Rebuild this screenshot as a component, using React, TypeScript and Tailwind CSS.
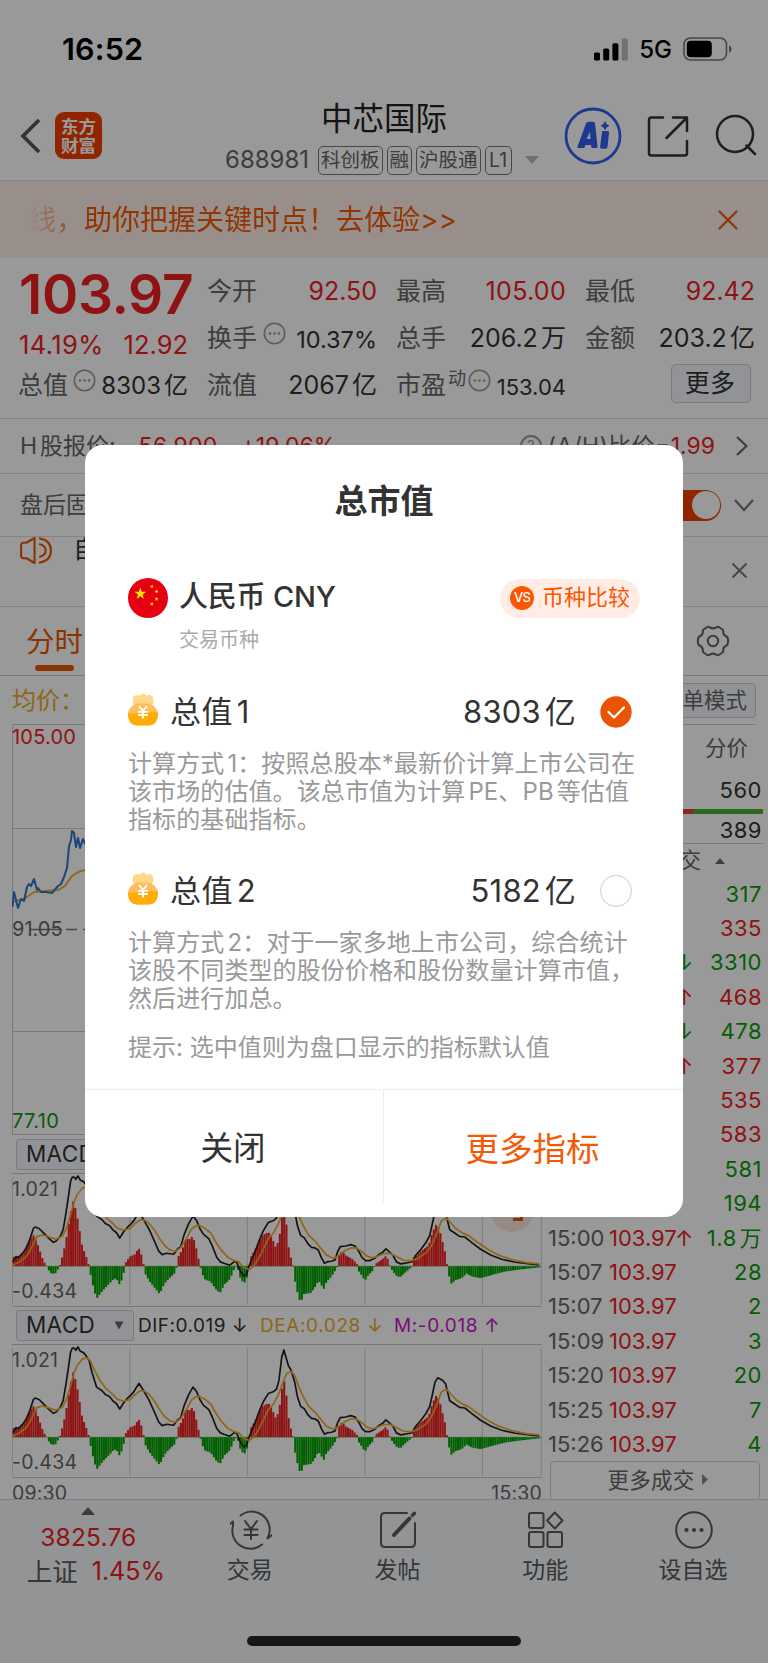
import type { ReactNode } from "react";

const FONT = "font-['Inter','Noto_Sans_CJK_SC',sans-serif] [text-autospace:normal]";

const UP = "text-[#f02020]";
const DOWN = "text-[#0a9b0a]";

// [time, price, arrow, volume, volume colour]
const TRADES: [string, string, string, string, "up" | "down"][] = [
  ["", "", "", "317", "down"],
  ["", "", "", "335", "up"],
  ["", "", "↓", "3310", "down"],
  ["", "", "↑", "468", "up"],
  ["", "", "↓", "478", "down"],
  ["", "", "↑", "377", "up"],
  ["", "", "", "535", "up"],
  ["", "", "", "583", "up"],
  ["", "", "", "581", "down"],
  ["", "", "", "194", "down"],
  ["15:00", "103.97", "↑", "1.8万", "down"],
  ["15:07", "103.97", "", "28", "down"],
  ["15:07", "103.97", "", "2", "down"],
  ["15:09", "103.97", "", "3", "down"],
  ["15:20", "103.97", "", "20", "down"],
  ["15:25", "103.97", "", "7", "down"],
  ["15:26", "103.97", "", "4", "down"],
];

// MACD series share one coordinate space, zero line at y=741
const ZERO = 741;
const DIF =
  "36,728 45,712 52,715 66,700 75,685 85,660 95,627 100,623 112,628 125,642 140,658 152,669 160,665 172,650 180,630 188,580 195,530 201,485 206,472 212,473 216,479 222,469 229,482 238,486 246,497 254,510 262,545 275,590 290,600 300,612 312,618 322,632 332,640 341,656 352,638 362,625 372,615 382,603 388,592 396,579 404,592 412,606 425,630 440,665 452,695 462,706 475,702 495,705 505,690 515,682 525,645 538,612 550,590 560,603 570,628 580,645 595,658 605,680 618,715 628,728 640,733 655,738 668,727 675,730 685,755 695,771 703,765 710,740 718,720 728,695 738,665 750,635 765,609 780,603 788,596 795,570 803,500 809,478 815,500 822,525 830,540 840,575 848,620 857,648 867,655 878,674 888,684 898,686 907,692 916,715 925,732 935,727 945,726 955,722 962,698 970,682 985,680 1000,676 1012,680 1022,695 1032,715 1042,724 1055,724 1068,717 1080,706 1090,700 1100,689 1110,698 1120,708 1130,728 1142,734 1155,732 1175,727 1185,708 1200,690 1215,668 1225,648 1233,610 1240,575 1248,562 1262,570 1270,580 1282,631 1295,640 1310,651 1325,653 1345,670 1370,690 1400,708 1430,720 1470,729 1510,734 1537,737";
const DEA =
  "36,738 55,728 75,712 90,685 105,652 120,647 138,652 160,660 178,650 190,625 200,590 210,550 220,524 235,505 248,502 258,512 270,540 285,570 300,592 318,609 335,627 350,632 370,628 385,612 400,601 412,602 425,612 440,632 455,658 470,680 485,692 500,696 515,685 530,660 545,630 558,619 568,618 580,624 600,640 615,668 630,692 650,715 665,723 680,728 695,745 710,751 722,742 735,722 750,690 765,658 780,640 795,610 808,570 818,548 830,543 840,555 852,590 865,620 880,648 900,668 915,688 930,707 945,715 955,716 970,705 985,693 1000,686 1015,686 1030,696 1045,710 1060,716 1075,712 1090,704 1110,702 1130,712 1150,723 1170,725 1190,718 1215,700 1230,680 1245,642 1258,605 1272,596 1285,610 1300,628 1320,642 1335,648 1360,668 1390,690 1420,707 1460,722 1500,730 1537,734";
const HIST =
  "36,715 45,712 55,712 62,705 75,686 85,660 98,645 103,662 112,690 120,715 130,738 135,741 138,752 148,765 158,762 165,750 170,741 172,730 180,705 190,650 200,585 208,545 216,570 224,615 234,680 245,710 254,741 258,765 268,815 276,838 285,825 295,812 315,790 325,778 332,780 341,797 350,775 356,741 358,730 370,712 385,705 395,685 405,712 410,741 412,760 425,785 440,805 455,825 468,795 480,780 500,760 504,741 508,712 520,690 530,658 540,660 550,650 560,690 566,720 571,741 575,762 585,782 600,787 615,810 627,822 640,795 652,785 662,765 670,741 678,750 686,780 696,793 706,770 710,741 714,715 725,695 735,675 745,650 765,638 775,655 785,682 795,665 803,600 809,565 816,610 822,680 830,720 836,741 840,780 850,830 857,852 866,825 885,822 895,810 908,785 915,795 922,812 930,790 945,772 958,750 962,741 964,712 975,695 985,708 1005,720 1018,735 1020,741 1022,755 1032,770 1040,785 1050,768 1062,755 1068,741 1072,732 1090,720 1102,708 1108,730 1112,741 1115,748 1128,768 1140,775 1155,760 1172,745 1176,741 1178,718 1195,700 1210,688 1222,678 1232,640 1245,612 1255,640 1262,670 1270,705 1275,741 1278,762 1286,794 1300,782 1315,778 1330,763 1345,772 1370,777 1400,768 1440,757 1490,750 1542,744";

const histPoints = HIST.split(" ").map((p) => p.split(",").map(Number));

function histAt(x: number) {
  const i = histPoints.findIndex((p) => p[0] >= x);
  if (i <= 0) return histPoints[0][1];
  const [x0, y0] = histPoints[i - 1];
  const [x1, y1] = histPoints[i];
  return y0 + ((y1 - y0) * (x - x0)) / (x1 - x0);
}

const BARS = Array.from({ length: 240 }, (_, i) => {
  const x = 36 + i * 6.27;
  return { x, y: histAt(x + 3) };
});

function MacdChart() {
  return (
    <div className="relative h-[134px] w-[530px] border-t border-b border-[#c3c6cd]">
      <svg className="block h-full w-full" viewBox="34 463 1511 398" preserveAspectRatio="none">
        {[35, 370, 705, 1040, 1375, 1543].map((x) => (
          <path key={x} d={`M${x} 472V857`} stroke="#d0d3dc" strokeWidth="3" />
        ))}
        {BARS.map((b) => (
          <rect
            key={b.x}
            x={b.x}
            width="5.9"
            y={Math.min(b.y, ZERO)}
            height={Math.abs(b.y - ZERO)}
            fill={b.y < ZERO ? "#f02020" : "#00a000"}
          />
        ))}
        <path d={`M36 ${ZERO}H1543`} stroke="#00a000" strokeWidth="1.5" opacity="0.6" />
        <polyline points={DIF} fill="none" stroke="#222" strokeWidth="1.7" strokeLinejoin="round" vectorEffect="non-scaling-stroke" />
        <polyline points={DEA} fill="none" stroke="#eeaa2c" strokeWidth="1.7" strokeLinejoin="round" vectorEffect="non-scaling-stroke" />
      </svg>
      <span className="absolute left-0 top-[3px] text-[19.5px] leading-6 tracking-[0.200px] text-[#666]">1.021</span>
      <span className="absolute left-0 bottom-[3px] text-[19.5px] leading-6 tracking-[0.300px] text-[#666]">-0.434</span>
    </div>
  );
}

function MacdButton() {
  return (
    <div className="flex h-[31px] w-[118px] items-center justify-between rounded-[3px] border border-[#c6cbd4] bg-[#f3f6fb] pl-[9px] pr-[9px] text-[22.500px] leading-none tracking-[0.300px] text-[#333]">
      MACD
      <svg width="10" height="9" viewBox="0 0 10 9" fill="#666">
        <path d="M0.5 0.5h9L5 8.500z" />
      </svg>
    </div>
  );
}

function Dots({ className }: { className: string }) {
  return (
    <svg className={className} width="23" height="23" viewBox="0 0 23 23" fill="none" stroke="#999" strokeWidth="1.6">
      <circle cx="11.500" cy="11.500" r="10.200" />
      <g fill="#999" stroke="none">
        <circle cx="7" cy="11.500" r="1.300" />
        <circle cx="11.500" cy="11.500" r="1.300" />
        <circle cx="16" cy="11.500" r="1.300" />
      </g>
    </svg>
  );
}

type QuoteProps = { label: string; value: string; className?: string; children?: ReactNode };

function Quote({ label, value, className = "text-[25px] text-[#333]", children }: QuoteProps) {
  return (
    <div className="flex h-[47px] items-center justify-between whitespace-nowrap">
      <span className="-ml-[1px] flex text-[25px] text-[#666]">
        {label}
        {children}
      </span>
      <span className={className}>{value}</span>
    </div>
  );
}

function Tag({ children }: { children: ReactNode }) {
  return <span className="whitespace-nowrap rounded-[5px] border border-[#777] px-[2px] text-[19.5px] leading-[27px]">{children}</span>;
}

function StatusBar() {
  return (
    <div className="flex h-[98px] items-center justify-between pl-[62px] pr-[36px] text-black">
      <span className="text-[30.500px] font-semibold leading-none tracking-[0.200px]">16:52</span>
      <div className="flex items-center">
        <svg width="34" height="23" viewBox="0 0 34 23">
          <rect x="0" y="14.500" width="6" height="8" rx="1.500" />
          <rect x="9.200" y="10.500" width="6" height="12" rx="1.500" />
          <rect x="18.400" y="5.300" width="6" height="17.200" rx="1.500" />
          <rect x="27.800" y="0.500" width="6" height="22" rx="1.500" fill="#bbb" />
        </svg>
        <span className="ml-[11px] mt-[2px] text-[24px] font-medium leading-none">5G</span>
        <svg className="ml-[11px]" width="49" height="24" viewBox="0 0 49 24">
          <rect x="1" y="1" width="42.500" height="22" rx="6.500" fill="none" stroke="#777" strokeWidth="1.600" />
          <rect x="3.800" y="3.800" width="25" height="16.400" rx="4" />
          <path d="M46 8.500c3.500 1 3.500 6 0 7z" fill="#777" />
        </svg>
      </div>
    </div>
  );
}

function Header() {
  return (
    <header className="flex h-[83px] items-start border-b border-[#d5d8de]">
      <svg className="ml-[20px] mt-[20px]" width="22" height="36" viewBox="0 0 22 36" fill="none" stroke="#555" strokeWidth="3.600">
        <path d="M19 2L3 18l16 16" />
      </svg>
      <div className="ml-[13px] mt-[14px] flex h-[47px] w-[47px] flex-col items-center justify-center rounded-[9px] bg-[#f03e00] text-[17.500px] font-bold leading-[19px] text-white">
        <span>东方</span>
        <span>财富</span>
      </div>
      <div className="ml-[123px] w-[313px] text-[#666]">
        <h1 className="pl-[96px] text-[31.500px] leading-[42px] text-[#222]">中芯国际</h1>
        <div className="mt-[5px] flex items-center gap-[4px]">
          <span className="mr-[3px] w-[86px] shrink-0 text-[24px] leading-[30px]">688981</span>
          <Tag>科创板</Tag>
          <Tag>融</Tag>
          <Tag>沪股通</Tag>
          <Tag>
            <span className="px-[1.500px]">L1</span>
          </Tag>
          <svg className="ml-[9px] shrink-0" width="14" height="8" viewBox="0 0 14 8" fill="#bbb">
            <path d="M0 0h14L7 8z" />
          </svg>
        </div>
      </div>
      <svg className="ml-[26px] mt-[9px]" width="58" height="58" viewBox="0 0 58 58">
        <circle cx="29" cy="29" r="27" fill="none" stroke="#3560f0" strokeWidth="2.800" />
        <path d="M13.500 39.500L22 16.500q.8-1.700 2.800-1.700h4q2 0 2.300 2l2.400 22.700q0 1.500-1.500 1.500h-4.500l-.5-3h-5.500l-1.200 3h-5.300q-2 0-1.500-1.500zM22.500 32h4l-.5-7z" fill="#3560f0" />
        <path d="M38.200 24h5.600q1.500 0 1.300 1.500L43.500 40q-.2 1.800-2 1.800h-4q-1.700 0-1.500-1.800z" fill="#3560f0" />
        <path d="M41 14q1 3.500 4.500 4.700Q42 20 41 23.200q-1-3.300-4.500-4.500Q40 17.500 41 14z" fill="#3560f0" />
      </svg>
      <svg className="ml-[25px] mt-[17px]" width="42" height="42" viewBox="0 0 42 42" fill="none" stroke="#333" strokeWidth="2.500" strokeLinecap="round" strokeLinejoin="round">
        <path d="M16 2.500H4.500q-2.500 0-2.500 2.500v33q0 2.500 2.500 2.500h33q2.500 0 2.500-2.500V26M26 2.500h14V16M40 2.500L19.500 23" />
      </svg>
      <svg className="ml-[25px] mt-[15px]" width="44" height="44" viewBox="0 0 44 44" fill="none" stroke="#333" strokeWidth="2.500" strokeLinecap="round">
        <circle cx="21" cy="21" r="18" />
        <path d="M32.500 32.500L41 41" />
      </svg>
    </header>
  );
}

function Banner() {
  return (
    <div className="flex h-[77px] items-center justify-between bg-[#ffeee6] pl-[28px] pr-[30px] text-[28px] text-[#f0590a]">
      <span className="[mask-image:linear-gradient(to_right,transparent,black_60px)]">线，助你把握关键时点！去体验&gt;&gt;</span>
      <svg width="20" height="20" viewBox="0 0 20 20" stroke="#f0590a" strokeWidth="2.200" strokeLinecap="round">
        <path d="M1.500 1.500l17 17M18.500 1.500l-17 17" />
      </svg>
    </div>
  );
}

function QuotePanel() {
  return (
    <section className="grid h-[161px] grid-cols-4 gap-x-[20px] border-b border-[#ddd] pl-[19px] pr-[13px] pt-[10px]">
      <div>
        <div className={`h-[52px] whitespace-nowrap text-[55px] font-semibold leading-[52px] tracking-[-0.300px] ${UP}`}>103.97</div>
        <div className={`flex h-[42px] items-center justify-between pt-[8px] text-[25.500px] leading-none ${UP}`}>
          <span className="tracking-[0.400px]">14.19%</span>
          <span>12.92</span>
        </div>
        <Quote label="总值" value="8303亿" className="pt-[1px] text-[24px] text-[#333]">
          <Dots className="ml-[5px] mt-[2px]" />
        </Quote>
      </div>
      <div>
        <Quote label="今开" value="92.50" className={`text-[25px] ${UP}`} />
        <Quote label="换手" value="10.37%" className="pt-[2px] text-[23.500px] text-[#333]">
          <Dots className="ml-[6px] mt-[2px]" />
        </Quote>
        <Quote label="流值" value="2067亿" />
      </div>
      <div>
        <Quote label="最高" value="105.00" className={`text-[25px] tracking-[0.300px] ${UP}`} />
        <Quote label="总手" value="206.2万" />
        <Quote label="市盈" value="153.04" className="mt-[4px] text-[22px] text-[#333]">
          <span className="-mt-[2px] ml-[2px] text-[18px]">动</span>
          <Dots className="ml-[2px] mt-[2px]" />
        </Quote>
      </div>
      <div>
        <Quote label="最低" value="92.42" className={`text-[25px] ${UP}`} />
        <Quote label="金额" value="203.2亿" />
        <div className="ml-auto mr-[4px] mt-[2px] flex h-[39px] w-[80px] items-center justify-center rounded-[5px] border border-[#c6cbd4] bg-[#f3f6fb] pr-[2px] text-[25px] tracking-[0.300px] text-[#333]">
          更多
        </div>
      </div>
    </section>
  );
}

function InfoRows() {
  return (
    <>
      <div className="flex h-[55px] items-center justify-between border-b border-[#ddd] pl-[20px] pr-[20px] text-[23px] text-[#666]">
        <span>
          H股报价:<span className={`ml-[23px] tracking-[0.300px] ${UP}`}>56.900</span>
          <span className={`ml-[23px] ${UP}`}>+19.06%</span>
        </span>
        <span className="flex items-center">
          <span className="mr-[6px] flex size-[22px] items-center justify-center rounded-full border-2 border-[#999] text-[15px] text-[#999]">?</span>
          <span className="tracking-[0.400px]">(A/H)比价=</span>
          <span className={UP}>1.99</span>
          <svg className="ml-[21px]" width="12" height="20" viewBox="0 0 12 20" fill="none" stroke="#666" strokeWidth="2.200">
            <path d="M1 1l9.500 9L1 19" />
          </svg>
        </span>
      </div>
      <div className="flex h-[63px] items-center border-b border-[#ddd] pl-[20px] pr-[14px] text-[23px] text-[#666]">
        盘后固定价格交易
        <div className="ml-auto flex h-[31px] w-[56px] items-center justify-end rounded-full bg-[#f03e00] p-[1.500px]">
          <div className="size-[28px] rounded-full bg-white" />
        </div>
        <svg className="ml-[13px]" width="20" height="13" viewBox="0 0 20 13" fill="none" stroke="#777" strokeWidth="2.200">
          <path d="M1 1l9 10 9-10" />
        </svg>
      </div>
      <div className="flex h-[70px] items-start overflow-hidden border-b border-[#ddd] pl-[19px] pr-[20px]">
        <svg width="34" height="27" viewBox="0 0 34 28" fill="none" stroke="#ea5504" strokeWidth="2.200" strokeLinejoin="round" strokeLinecap="round">
          <path d="M7 6L15.500 1v26L7 22H4q-2.500 0-2.500-3V9q0-3 2.500-3z" />
          <path d="M21 7.500q6 1.500 6 6.500t-6 6.500M21 1.500q11.500 2 11.500 12.500T21 26.500" />
        </svg>
        <span className="-mt-[6px] ml-[20px] text-[25px] leading-[36px] text-[#333]">自选</span>
        <svg className="ml-auto mt-[25px]" width="17" height="17" viewBox="0 0 17 17" stroke="#777" strokeWidth="2">
          <path d="M1.500 1.500l14 14M15.500 1.500l-14 14" />
        </svg>
      </div>
      <div className="flex h-[69px] items-center justify-between border-b border-[#ccc] pl-[26px] pr-[38px]">
        <div className="flex flex-col items-center text-[28.500px] text-[#ea5504]">
          <span className="mt-[8px] leading-[44px]">分时</span>
          <span className="mt-[1px] h-[6px] w-[39px] rounded-full bg-[#ea5504]" />
        </div>
        <svg width="34" height="32" viewBox="0 0 34 32" fill="none" stroke="#666" strokeWidth="2.100" strokeLinejoin="round">
          <circle cx="17" cy="16" r="5.200" />
          <path d="M10.500 2.500q1.500-1.500 3.500 0 3 1.800 6 0 2-1.500 3.500 0l3 2q.8.700.7 2.500.3 3.500 3 4.300 1.300.6 1.500 2 .8 2.700 0 5.400-.3 1.400-1.500 2-2.700.8-3 4.300.1 1.800-.7 2.500l-3 2q-1.500 1.500-3.500 0-3-1.800-6 0-2 1.500-3.500 0l-3-2q-.8-.7-.7-2.500-.3-3.500-3-4.300-1.200-.6-1.500-2-.8-2.700 0-5.400.2-1.400 1.500-2 2.700-.8 3-4.300-.1-1.800.7-2.500z" />
        </svg>
      </div>
    </>
  );
}

function PriceChart() {
  return (
    <div className="relative h-[412px] w-[530px]">
      <svg className="block" width="530" height="412" viewBox="12 725 530 412" fill="none">
        <path d="M12.500 725.500h529v410h-529zM12 829.500h529M12 1032.500h529" stroke="#c9ccd6" />
        <path d="M66 930.500h475" stroke="#777" strokeWidth="1.500" strokeDasharray="11 6" />
        <path d="M12 904l3-2 9-2 10-7 11-1 13-1 7-4 7-10 8-5 6-1h20" stroke="#eeaa2c" strokeWidth="1.800" />
        <path
          d="M12.500 908L14 893l4 16 3-9 3 2 3-14 2-3 2 2 3-7 3 11 1-2 3 4h5l6 1 6-7 3-2 3-7 3-9 2-22 2-6 1-9 2 2 2 14 2-9 2 10 3-9 2 5 4-5"
          stroke="#2f76c8"
          strokeWidth="2"
          strokeLinejoin="round"
        />
        <path d="M30 930.500h32" stroke="#777" strokeWidth="1.500" />
      </svg>
      <span className={`absolute left-0 top-[1px] text-[20px] leading-6 tracking-[0.200px] ${UP}`}>105.00</span>
      <span className="absolute left-0 top-[193px] text-[20px] leading-6 text-[#666]">91.05</span>
      <span className={`absolute bottom-[3px] left-0 text-[20px] leading-6 tracking-[0.400px] ${DOWN}`}>77.10</span>
    </div>
  );
}

function ChartColumn() {
  return (
    <div className="w-[530px]">
      <div className="h-[48px] pt-[2px] text-[24px] leading-[46px] text-[#e8ac28]">均价：</div>
      <PriceChart />
      <div className="flex h-[37px] items-center pl-[4px]">
        <MacdButton />
      </div>
      <div className="relative">
        <MacdChart />
        <div className="absolute left-[478px] top-[15px] flex size-[44px] items-end justify-end rounded-full bg-[#fbe6da] pb-[11px] pr-[11px]">
          <div className="h-[7px] w-[10px] border-b-[3px] border-r-[3px] border-[#ea5504]" />
        </div>
      </div>
      <div className="flex h-[37px] items-center pl-[4px] text-[19px]">
        <MacdButton />
        <span className="ml-[4px] w-[122px] pt-[2px] tracking-[0.500px] text-[#333]">DIF:0.019 ↓</span>
        <span className="w-[134px] pt-[2px] tracking-[0.600px] text-[#e8ac28]">DEA:0.028 ↓</span>
        <span className="pt-[2px] tracking-[0.600px] text-[#c818c8]">M:-0.018 ↑</span>
      </div>
      <MacdChart />
      <div className="flex justify-between text-[19.500px] leading-[31px] text-[#666]">
        <span className="tracking-[0.200px]">09:30</span>
        <span className="tracking-[0.200px]">15:30</span>
      </div>
    </div>
  );
}

function TradeColumn() {
  return (
    <div className="ml-[6px] w-[216px]">
      <div className="mr-[8px] flex h-[49px] justify-end border-b border-[#ccc] pt-[7px]">
        <span className="flex h-[35px] items-center rounded-[4px] border border-[#c6cbd4] bg-[#f3f6fb] px-[8px] text-[21.500px] text-[#666]">简单模式</span>
      </div>
      <div className="pr-[16px] text-right text-[21.500px] leading-[47px] text-[#666]">分价</div>
      <div className="pr-[2px] text-right text-[22px] leading-[36px] tracking-[0.500px] text-[#333]">560</div>
      <div className="mr-[1px] mt-[1px] flex h-[5px] bg-[linear-gradient(120deg,#e84040_67.300%,#4cb034_67.600%)]" />
      <div className="h-[30px] border-b border-[#ccc] pr-[2px] text-right text-[22px] leading-[33px] tracking-[0.500px] text-[#333]">389</div>
      <div className="flex h-[33px] items-center justify-end pr-[39px] text-[21.500px] text-[#666]">
        成交
        <svg className="ml-[14px]" width="10" height="6" viewBox="0 0 10 6" fill="#666">
          <path d="M0 6h10L5 0z" />
        </svg>
      </div>
      {TRADES.map(([time, price, arrow, vol, dir], i) => (
        <div key={i} className="flex h-[34.400px] items-center pr-[2px] text-[22px]">
          <span className="w-[61px] text-[#666]">{time}</span>
          <span className={`w-[66px] ${UP}`}>{price}</span>
          <span className={arrow === "↓" ? DOWN : UP}>{arrow}</span>
          <span className={`ml-auto tracking-[0.500px] ${dir === "up" ? UP : DOWN}`}>{vol}</span>
        </div>
      ))}
      <div className="ml-[2px] mr-[4px] mt-[-1px] flex h-[40px] items-center justify-center rounded-[5px] border border-[#ccc] pb-[2px] pl-[5px] text-[21.500px] tracking-[0.300px] text-[#666]">
        更多成交
        <svg className="ml-[7px]" width="6" height="11" viewBox="0 0 6 11" fill="#888">
          <path d="M0 0v11l6-5.500z" />
        </svg>
      </div>
    </div>
  );
}

function NavItem({ label, children }: { label: string; children: ReactNode }) {
  return (
    <div className="flex w-[148px] flex-col items-center pt-[10px] text-[23px] leading-[40px]">
      <svg width="42" height="40" viewBox="0 0 42 40" fill="none" stroke="#5a5a5a" strokeWidth="2" strokeLinecap="round" strokeLinejoin="round">
        {children}
      </svg>
      <span className="pr-[2px]">{label}</span>
    </div>
  );
}

function BottomNav() {
  return (
    <nav className="relative flex h-[164px] border-t border-[#cfd2da] bg-[#f5f7fa] text-[#5a5a5a]">
      <div className="flex w-[177px] flex-col items-center">
        <svg className="mt-[7px]" width="14" height="8" viewBox="0 0 14 8" fill="#666">
          <path d="M0 8h14L7 0z" />
        </svg>
        <span className={`mt-[5px] text-[24.500px] leading-[34px] tracking-[0.200px] ${UP}`}>3825.76</span>
        <span className="flex pl-[15px] text-[25.500px] leading-[35px]">
          上证<span className={`ml-[14px] text-[25px] ${UP}`}>1.45%</span>
        </span>
      </div>
      <NavItem label="交易">
        <path d="M10.500 5.500A18 18 0 0 1 39 24.500l-1.500 3.500M42 25l-4.500 3.500M32 34.500A18 18 0 0 1 3 16v-4.500L0 14" />
        <path d="M15 11l6 8 6-8M21 19v10M14.500 19.500h13M14.500 25h13" />
      </NavItem>
      <NavItem label="发帖">
        <path d="M30 3H8Q4 3 4 7v26q0 4 4 4h26q4 0 4-4V13" />
        <path d="M17 25L32.500 8.500" strokeWidth="4" />
        <path d="M35.500 5.300l2-2" strokeWidth="3.500" />
      </NavItem>
      <NavItem label="功能">
        <rect x="4" y="3" width="14.500" height="15" rx="2" />
        <rect x="4" y="22" width="14.500" height="15" rx="2" />
        <rect x="22.500" y="22" width="14.500" height="15" rx="2" />
        <path d="M29.800 2.500l7.700 8-7.700 8-7.700-8z" />
      </NavItem>
      <NavItem label="设自选">
        <circle cx="21" cy="20" r="17.800" />
        <g fill="#5a5a5a" stroke="none">
          <circle cx="13.500" cy="20" r="2.100" />
          <circle cx="21" cy="20" r="2.100" />
          <circle cx="28.500" cy="20" r="2.100" />
        </g>
      </NavItem>
      <div className="absolute bottom-[17px] left-[247px] h-[10px] w-[274px] rounded-full bg-[#262626]" />
    </nav>
  );
}

function MoneyBag() {
  return (
    <svg width="30" height="33" viewBox="0 0 30 33">
      <path d="M7 13Q3.500 10 5 7q-1-4.500 4-5 2 0 2.500 1Q12.500.500 15 .500T18.500 3q1-1.300 3-1 4.500.8 3.500 5 1.500 3-2 6z" fill="#ffd98a" />
      <path d="M8.500 10.500h13Q30 14.500 30 21q-.5 11.500-10 11.500H10Q.5 32.500 0 21q0-6.500 8.500-10.500z" fill="#ffbe5e" />
      <path d="M0 20.500q7 .8 15-.5t15-.5Q30 32.500 20 32.500H10Q0 32.500 0 20.500z" fill="#ffad05" />
      <path d="M11 13l4 5 4-5M15 18v7.500M10 18.800h10M10 22h10" stroke="#fff" strokeWidth="1.800" fill="none" />
    </svg>
  );
}

const STAR = "M0-1L.2245-.309.951-.309.3633.118.5878.809 0 .382-.5878.809-.3633.118-.951-.309-.2245-.309z";

function Flag() {
  return (
    <svg width="40" height="40" viewBox="0 0 40 40" fill="#ffe600">
      <circle cx="20" cy="20" r="20" fill="#e60012" />
      <path d={STAR} transform="translate(12.300 15.800) scale(6.300)" />
      <path d={STAR} transform="translate(23.800 8.500) rotate(20) scale(2.300)" />
      <path d={STAR} transform="translate(28.600 13.500) rotate(-10) scale(2.300)" />
      <path d={STAR} transform="translate(28.600 21) scale(2.300)" />
      <path d={STAR} transform="translate(23.800 26) rotate(20) scale(2.300)" />
    </svg>
  );
}

function Option({ title, value, checked, lines }: { title: string; value: string; checked?: boolean; lines: string[] }) {
  return (
    <div>
      <div className="flex h-[44px] items-center text-[31px] text-[#333]">
        <span className="-mt-[6px] mr-[12px]">
          <MoneyBag />
        </span>
        <span className="tracking-[0.400px]">{title}</span>
        <span className="ml-auto mr-[24px] tracking-[0.200px]">{value}</span>
        {checked ? (
          <svg className="mr-[8px]" width="32" height="32" viewBox="0 0 32 32" fill="none">
            <circle cx="16" cy="16" r="15.700" fill="#ea5504" />
            <path d="M8.500 16l5.500 5.500L24 11.500" stroke="#fff" strokeWidth="2.200" strokeLinecap="round" strokeLinejoin="round" />
          </svg>
        ) : (
          <span className="mr-[8px] size-[32px] rounded-full border-[1.500px] border-[#ccc]" />
        )}
      </div>
      <div className="mt-[16px] whitespace-nowrap text-[24px] leading-[28px] tracking-[0.100px] text-[#999]">
        {lines.map((l) => (
          <p key={l}>{l}</p>
        ))}
      </div>
    </div>
  );
}

function MarketCapDialog() {
  return (
    <div className="absolute left-[85px] top-[445px] flex h-[772px] w-[598px] flex-col rounded-[18px] bg-white">
      <h2 className="mt-[32px] text-center text-[33px] font-semibold leading-[48px] text-[#333]">总市值</h2>
      <div className="mt-[53px] px-[43px]">
        <div className="flex h-[40px] items-center">
          <Flag />
          <span className="-mt-[2px] ml-[11px] text-[29px] font-medium tracking-[-0.200px] text-[#333]">人民币 CNY</span>
          <span className="ml-auto flex h-[39px] w-[140px] items-center rounded-full bg-[#ffede5] pl-[10px] text-[22px] text-[#ff5500]">
            <span className="mr-[8px] flex size-[24px] items-center justify-center rounded-full bg-[#ff5500] text-[13px] font-medium tracking-[-0.800px] text-white">VS</span>
            <span className="-mt-[1px]">币种比较</span>
          </span>
        </div>
        <div className="ml-[51px] mt-[7px] text-[20px] leading-[30px] text-[#aaa]">交易币种</div>
        <div className="mt-[35px]">
          <Option
            title="总值1"
            value="8303亿"
            checked
            lines={["计算方式1：按照总股本*最新价计算上市公司在", "该市场的估值。该总市值为计算PE、PB等估值", "指标的基础指标。"]}
          />
        </div>
        <div className="mt-[35px]">
          <Option
            title="总值2"
            value="5182亿"
            lines={["计算方式2：对于一家多地上市公司，综合统计", "该股不同类型的股份价格和股份数量计算市值，", "然后进行加总。"]}
          />
        </div>
        <p className="mt-[21px] text-[24px] leading-[28px] text-[#999]">提示: 选中值则为盘口显示的指标默认值</p>
      </div>
      <div className="mt-auto flex h-[128px] border-t border-[#eee]">
        <button className="mb-[14px] flex w-1/2 items-center justify-center border-r border-[#eee] pr-[2px] pt-[6px] text-[32.500px] text-[#333]">关闭</button>
        <button className="mb-[14px] flex w-1/2 items-center justify-center pr-[2px] pt-[5px] text-[33.500px] text-[#f25a05]">更多指标</button>
      </div>
    </div>
  );
}

export default function App() {
  return (
    <div className={`relative h-[1663px] w-[768px] overflow-hidden bg-white ${FONT}`}>
      <StatusBar />
      <div className="pt-0">
        <Header />
      </div>
      <Banner />
      <QuotePanel />
      <InfoRows />
      <div className="flex h-[823px] overflow-hidden pl-[12px]">
        <ChartColumn />
        <TradeColumn />
      </div>
      <BottomNav />
      <div className="absolute inset-0 bg-black/40" />
      <MarketCapDialog />
    </div>
  );
}
